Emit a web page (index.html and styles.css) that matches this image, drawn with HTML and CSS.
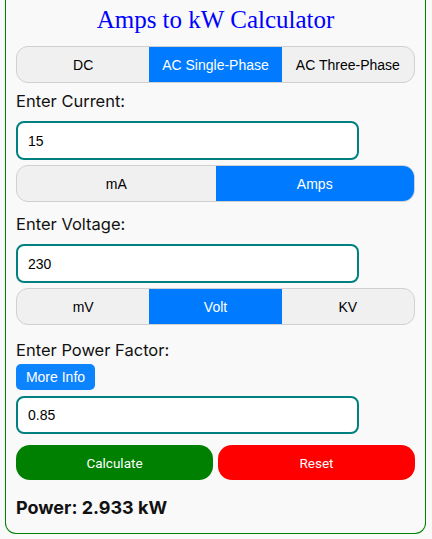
FILE: index.html
```html
<!DOCTYPE html>
<html>
<head>
<meta charset="utf-8">
<link rel="stylesheet" href="styles.css">
</head>
<body>
<div class="calc">
  <h1 class="title">Amps to kW Calculator</h1>
  <div class="seg seg-3">
    <div class="seg-item">DC</div>
    <div class="seg-item active">AC Single-Phase</div>
    <div class="seg-item">AC Three-Phase</div>
  </div>
  <div class="label">Enter Current:</div>
  <div class="field">15</div>
  <div class="seg seg-2 seg-gap">
    <div class="seg-item">mA</div>
    <div class="seg-item active">Amps</div>
  </div>
  <div class="label label-2">Enter Voltage:</div>
  <div class="field">230</div>
  <div class="seg seg-3 seg-gap">
    <div class="seg-item">mV</div>
    <div class="seg-item active">Volt</div>
    <div class="seg-item">KV</div>
  </div>
  <div class="label label-3">Enter Power Factor:</div>
  <div class="info-btn">More Info</div>
  <div class="field field-pf">0.85</div>
  <div class="actions">
    <div class="btn btn-calc">Calculate</div>
    <div class="btn btn-reset">Reset</div>
  </div>
  <div class="result">Power: 2.933 kW</div>
</div>
</body>
</html>
```

FILE: styles.css
```css
html, body {
  margin: 0;
  padding: 0;
  background: #f9f9f9;
}
body {
  padding: 0 6px 0 5px;
}
.calc {
  box-sizing: border-box;
  width: 421px;
  height: 534px;
  border: 1px solid #008000;
  border-top: none;
  border-radius: 0 0 11px 11px;
  background: #f9f9f9;
  padding: 0 10px;
  display: flex;
  flex-direction: column;
  font-family: Inter, "Liberation Sans", sans-serif;
  color: #111;
}
.title {
  margin: 0;
  height: 46px;
  line-height: 40px;
  text-align: center;
  font-family: "Liberation Serif", serif;
  font-weight: normal;
  font-size: 25px;
  color: #0000ff;
  letter-spacing: 0;
}
.seg {
  display: flex;
  height: 37px;
  box-sizing: border-box;
  border: 1px solid #d0d0d0;
  border-radius: 12px;
  background: #f0f0f0;
  overflow: hidden;
  font-family: "Liberation Sans", Arial, sans-serif;
  font-size: 14px;
  color: #000;
}
.seg-gap {
  margin-top: 5px;
}
.seg-item {
  flex: 1;
  display: flex;
  align-items: center;
  justify-content: center;
}
.seg-item.active {
  background: #007bff;
  color: #fff;
}
.label {
  font-size: 16.5px;
  line-height: 20px;
  margin-top: 8px;
  height: 20px;
}
.label-2 {
  margin-top: 12px;
}
.label-3 {
  margin-top: 15px;
}
.field {
  box-sizing: border-box;
  width: 343px;
  height: 39px;
  margin-top: 10px;
  border: 2px solid #008080;
  border-radius: 8px;
  background: #fff;
  padding: 0 10px;
  display: flex;
  align-items: center;
  font-family: "Liberation Sans", Arial, sans-serif;
  font-size: 14px;
  color: #000;
}
.field-pf {
  margin-top: 6px;
  height: 38px;
}
.info-btn {
  align-self: flex-start;
  margin-top: 4px;
  height: 26px;
  width: 79px;
  box-sizing: border-box;
  border-radius: 5px;
  background: #0d84ff;
  color: #fff;
  font-family: "Liberation Sans", Arial, sans-serif;
  font-size: 14px;
  display: flex;
  align-items: center;
  justify-content: center;
}
.actions {
  display: flex;
  gap: 5px;
  margin-top: 11px;
}
.btn {
  flex: 1;
  height: 35px;
  border-radius: 14px;
  color: #fff;
  font-family: Roboto, "Liberation Sans", sans-serif;
  font-size: 13.5px;
  display: flex;
  align-items: center;
  justify-content: center;
}
.btn-calc {
  background: #008000;
}
.btn-reset {
  background: #ff0000;
}
.result {
  margin-top: 17px;
  font-weight: bold;
  font-size: 18px;
  line-height: 22px;
}
```
